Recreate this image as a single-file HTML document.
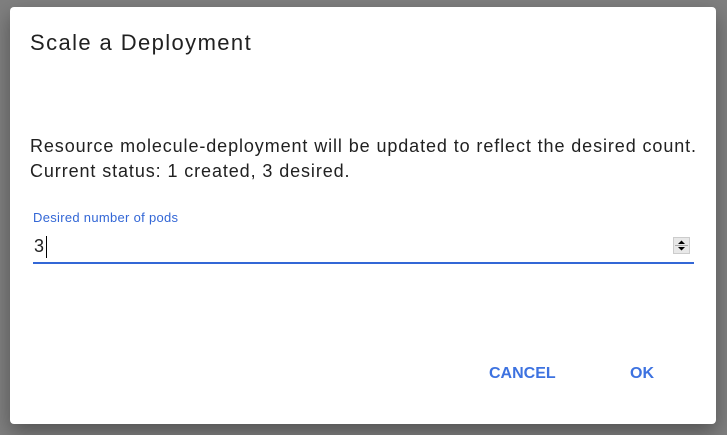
<!DOCTYPE html>
<html><head><style>
body{margin:0;width:727px;height:435px;background:#7f7f7f;font-family:"Liberation Sans",sans-serif;overflow:hidden;position:relative}
.d{position:absolute;left:10px;top:7px;width:706px;height:417px;background:#fff;border-radius:4px;box-shadow:0 8px 20px rgba(0,0,0,.35)}
.t{position:absolute;left:20px;top:23px;font-size:22px;color:#212121;letter-spacing:1.4px}
.b{position:absolute;left:20px;top:127px;font-size:18px;line-height:25px;color:#212121;letter-spacing:0.9px;white-space:nowrap}
.l{position:absolute;left:23px;top:203px;font-size:13px;color:#3367d6;letter-spacing:0.3px}
.v{position:absolute;left:24px;top:229px;font-size:18px;color:#212121}
.c{position:absolute;left:36px;top:229px;width:1px;height:22px;background:#000}
.u{position:absolute;left:23px;top:255px;width:661px;height:2px;background:#3367d6}
.s{position:absolute;left:663px;top:230px;width:17px;height:17px;background:#e8e8e8;border:1px solid #ccc;box-sizing:border-box}
.btn{position:absolute;top:358px;font-size:16px;font-weight:bold;color:#3d72e0;letter-spacing:0}
</style></head><body>
<div class="d">
<div class="t">Scale a Deployment</div>
<div class="b">Resource molecule-deployment will be updated to reflect the desired count.<br>Current status: 1 created, 3 desired.</div>
<div class="l">Desired number of pods</div>
<div class="v">3</div><div class="c"></div>
<div class="s"><svg width="15" height="15" style="position:absolute;left:0;top:0"><path d="M4 6L7.5 2.5L11 6Z M4 9L11 9L7.5 12.5Z" fill="#000"/><line x1="1" y1="7.5" x2="14" y2="7.5" stroke="#aaa"/></svg></div>
<div class="u"></div>
<div class="btn" style="left:479px">CANCEL</div>
<div class="btn" style="left:620px">OK</div>
</div>
</body></html>
